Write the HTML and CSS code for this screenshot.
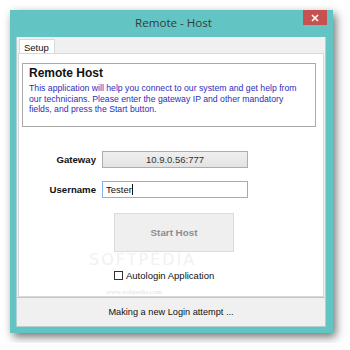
FILE: index.html
```html
<!DOCTYPE html>
<html>
<head>
<meta charset="utf-8">
<link rel="stylesheet" href="styles.css">
</head>
<body>
<div class="window">
  <div class="titlebar">
    <span></span>
    <span class="title">Remote - Host</span>
    <span class="close"><svg width="8" height="8" viewBox="0 0 8 8"><path d="M1 1L7 7M7 1L1 7" stroke="#fff" stroke-width="1.6"/></svg></span>
  </div>
  <div class="client">
    <div class="tabs">
      <div class="tab">Setup</div>
    </div>
    <div class="panel">
      <div class="group">
        <div class="group-title">Remote Host</div>
        <p class="group-text">This application will help you connect to our system and get help from<br>our technicians. Please enter the gateway IP and other mandatory<br>fields, and press the Start button.</p>
      </div>
      <div class="form">
        <label class="lbl">Gateway</label>
        <div class="btn-field">10.9.0.56:777</div>
        <label class="lbl">Username</label>
        <div class="input">Tester<span class="caret"></span></div>
      </div>
      <div class="start">Start Host</div>
      <div class="check-row">
        <span class="box"></span>
        <span class="check-label">Autologin Application</span>
      </div>
      <div class="wm-big">SOFTPEDIA</div>
      <div class="wm-small">www.softpedia.com</div>
    </div>
    <div class="status">Making a new Login attempt ...</div>
  </div>
</div>
</body>
</html>
```

FILE: styles.css
```css
html, body {
  margin: 0;
  padding: 0;
  background: #ffffff;
}
body {
  padding: 10px;
  font-family: "Liberation Sans", Arial, sans-serif;
}
.window {
  width: 323px;
  height: 323px;
  background: #62c4c3;
  box-shadow: 3px 4px 9px rgba(0, 0, 0, 0.55);
  display: flex;
  flex-direction: column;
  box-sizing: border-box;
}
.titlebar {
  height: 27px;
  display: grid;
  grid-template-columns: 1fr auto 1fr;
  align-items: start;
  padding-right: 6px;
}
.title {
  font-family: "Open Sans", "Noto Sans", sans-serif;
  font-size: 11.6px;
  color: #333c3c;
  padding-top: 4px;
  line-height: 17px;
  margin-left: 10px;
}
.close {
  justify-self: end;
  width: 24px;
  height: 15px;
  background: #c75050;
  display: flex;
  align-items: center;
  justify-content: center;
}
.client {
  flex: 1;
  margin: 0 7px 6px 6px;
  background: #f0f0f0;
  display: flex;
  flex-direction: column;
  border: 1px solid #b4cfcf;
  border-top: none;
}
.tabs {
  height: 16px;
  padding: 0 2px;
  display: flex;
  align-items: flex-end;
}
.tab {
  height: 15px;
  width: 36px;
  background: #ffffff;
  border: 1px solid #d9d9d9;
  border-bottom: none;
  font-size: 9.5px;
  line-height: 15px;
  padding-left: 4px;
  color: #111;
  box-sizing: border-box;
  position: relative;
  top: 1px;
}
.panel {
  height: 244px;
  margin: 0 1px;
  background: #ffffff;
  border: 1px solid #d9d9d9;
  box-sizing: border-box;
  position: relative;
}
.group {
  margin: 9px 7px 0 3px;
  height: 64px;
  border: 1px solid #a9a9a9;
  box-sizing: border-box;
  padding: 2px 6px 0 6px;
}
.group-title {
  font-weight: bold;
  font-size: 12px;
  line-height: 14px;
  color: #111;
}
.group-text {
  margin: 3px 0 0 0;
  font-size: 8.7px;
  line-height: 10.5px;
  color: #2e2eb8;
  white-space: nowrap;
}
.form {
  margin: 24px 0 0 0;
  display: grid;
  grid-template-columns: 77px 146px;
  column-gap: 6px;
  row-gap: 13px;
  align-items: center;
}
.lbl {
  text-align: right;
  font-weight: bold;
  font-size: 9.6px;
  color: #111;
}
.btn-field {
  height: 17px;
  background: linear-gradient(#efefef, #e3e3e3);
  border: 1px solid #adadad;
  box-sizing: border-box;
  font-size: 9.5px;
  line-height: 15px;
  text-align: center;
  color: #333;
}
.input {
  height: 17px;
  border: 1px solid #7eb4ea;
  box-sizing: border-box;
  font-size: 9.5px;
  line-height: 15px;
  padding-left: 3px;
  color: #111;
  display: flex;
  align-items: center;
}
.caret {
  display: inline-block;
  width: 1px;
  height: 11px;
  background: #111;
}
.start {
  margin: 15px 0 0 95px;
  width: 120px;
  height: 39px;
  background: #efefef;
  border: 1px solid #dcdcdc;
  box-sizing: border-box;
  font-weight: bold;
  font-size: 9.8px;
  color: #8d8d8d;
  display: flex;
  align-items: center;
  justify-content: center;
}
.check-row {
  margin: 18px 0 0 95px;
  display: flex;
  align-items: center;
  gap: 3px;
  position: relative;
  z-index: 1;
}
.box {
  width: 9px;
  height: 9px;
  border: 1px solid #333;
  background: #fff;
  box-sizing: border-box;
}
.check-label {
  font-size: 9.5px;
  line-height: 11px;
  color: #111;
}
.wm-big {
  position: absolute;
  left: 70px;
  top: 199px;
  font-size: 16px;
  line-height: 13px;
  letter-spacing: 2px;
  color: #f1f1f1;
  font-family: "DejaVu Sans", sans-serif;
}
.wm-small {
  position: absolute;
  left: 87px;
  top: 234px;
  font-size: 7px;
  color: #e2e2e2;
  font-family: "Liberation Serif", serif;
}
.status {
  flex: 1;
  border-top: 1px solid #c6c6c6;
  font-size: 9.2px;
  color: #111;
  display: flex;
  align-items: center;
  justify-content: center;
}
```
